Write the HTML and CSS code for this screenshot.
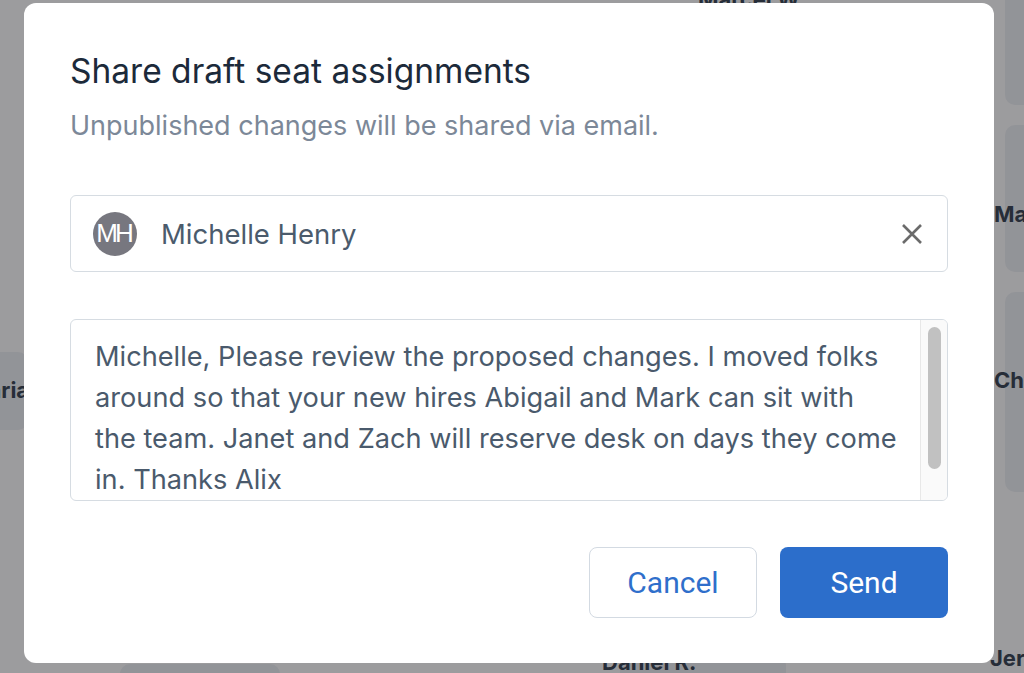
FILE: index.html
```html
<!DOCTYPE html>
<html lang="en">
<head>
    <meta charset="utf-8">
    <title>Seat map</title>
    <link rel="stylesheet" href="styles.css">
</head>
<body>

<!-- floor plan behind the dialog -->
<div class="floor">
    <div class="seat seat-a"><span class="seat-name name-top">Marcel W.</span></div>
    <div class="seat seat-b"></div>
    <div class="seat seat-c"><span class="seat-name">Mark</span></div>
    <div class="seat seat-d"><span class="seat-name">Charles</span></div>
    <div class="seat seat-e"><span class="seat-name">Maria</span></div>
    <div class="seat seat-f"><span class="seat-name">Daniel R.</span></div>
    <div class="seat seat-g"><span class="seat-name">Jeremy</span></div>
    <div class="seat seat-h"></div>
</div>

<div class="backdrop">
    <div class="dialog">
        <h1 class="dialog-title">Share draft seat assignments</h1>
        <p class="dialog-sub">Unpublished changes will be shared via email.</p>

        <div class="recipient">
            <span class="avatar">MH</span>
            <span class="recipient-name">Michelle Henry</span>
            <button class="clear" title="Remove">
                <svg width="22" height="22" viewBox="0 0 22 22">
                    <path d="M2 2L20 20M20 2L2 20" stroke="#6b6b6b" stroke-width="2.6"/>
                </svg>
            </button>
        </div>

        <div class="message">
            <div class="message-text">Michelle, Please review the proposed changes. I moved folks<br>around so that your new hires Abigail and Mark can sit with<br>the team. Janet and Zach will reserve desk on days they come<br>in. Thanks Alix</div>
            <div class="scroll-rail"><div class="scroll-thumb"></div></div>
        </div>

        <div class="actions">
            <button class="btn btn-cancel">Cancel</button>
            <button class="btn btn-send">Send</button>
        </div>
    </div>
</div>

</body>
</html>
```

FILE: styles.css
```css
html, body {
    margin: 0;
    padding: 0;
    width: 1024px;
    height: 673px;
    overflow: hidden;
    background-color: #f7f7f7;
    font-family: Inter, "Liberation Sans", sans-serif;
}

/* floor plan */

.floor {
    position: relative;
    width: 1024px;
    height: 673px;
    overflow: hidden;
}

.seat {
    position: absolute;
    background-color: #e6e8ec;
    border-radius: 10px;
}

.seat-name {
    position: absolute;
    font-family: Inter, sans-serif;
    font-weight: 700;
    font-size: 22px;
    color: #2b3747;
    white-space: nowrap;
}

.seat-a { left: 640px; top: -60px; width: 320px; height: 70px; background: transparent; }
.seat-a .name-top { left: 58px; top: 46px; }
.seat-b { left: 1005px; top: -20px; width: 80px; height: 125px; }
.seat-c { left: 1005px; top: 125px; width: 80px; height: 147px; }
.seat-c .seat-name { left: -11px; top: 76px; }
.seat-d { left: 1005px; top: 292px; width: 80px; height: 200px; }
.seat-d .seat-name { left: -11px; top: 75px; }
.seat-e { left: -90px; top: 352px; width: 118px; height: 78px; }
.seat-e .seat-name { left: 58px; top: 25px; }
.seat-f { left: 620px; top: 655px; width: 166px; height: 60px; }
.seat-f .seat-name { left: -18px; top: -6px; }
.seat-g { left: 1000px; top: 630px; width: 80px; height: 80px; background: transparent; }
.seat-g .seat-name { left: -10px; top: 15px; }
.seat-h { left: 120px; top: 664px; width: 160px; height: 40px; }

/* dialog */

.backdrop {
    position: fixed;
    left: 0;
    top: 0;
    right: 0;
    bottom: 0;
    background-color: rgba(30, 32, 36, 0.42);
    padding: 3px 0 0 24px;
}

.dialog {
    box-sizing: border-box;
    width: 970px;
    height: 660px;
    background-color: #fff;
    border-radius: 12px;
    padding: 46px 46px 0 46px;
}

.dialog-title {
    margin: 0;
    font-size: 33.5px;
    line-height: 44px;
    font-weight: 400;
    color: #1c2a3a;
}

.dialog-sub {
    margin: 17px 0 0 0;
    font-size: 27px;
    line-height: 32px;
    color: #7c8898;
}

.recipient {
    box-sizing: border-box;
    display: flex;
    align-items: center;
    height: 77px;
    margin-top: 53px;
    padding: 0 24px 0 22px;
    border: 1px solid #d6dce2;
    border-radius: 6px;
}

.avatar {
    display: flex;
    align-items: center;
    justify-content: center;
    width: 44px;
    height: 44px;
    border-radius: 50%;
    background-color: #77777f;
    color: #fff;
    font-family: "Liberation Sans", sans-serif;
    font-size: 26px;
    letter-spacing: -3px;
    text-indent: -3px;
}

.recipient-name {
    flex: 1;
    margin-left: 24px;
    font-size: 27.5px;
    color: #4b5b6c;
}

.clear {
    display: flex;
    padding: 0;
    border: 0;
    background: none;
    cursor: pointer;
}

.message {
    box-sizing: border-box;
    display: flex;
    height: 182px;
    margin-top: 47px;
    border: 1px solid #d6dce2;
    border-radius: 6px;
    overflow: hidden;
}

.message-text {
    flex: 1;
    padding: 16px 10px 0 24px;
    font-size: 27.2px;
    line-height: 41px;
    color: #4a5a6c;
    white-space: nowrap;
}

/* scrollbar of the message box */
.scroll-rail {
    width: 27px;
    padding: 7px 6px 0 7px;
    box-sizing: border-box;
    background-color: #fafafa;
    border-left: 1px solid #e8e8e8;
}

.scroll-thumb {
    height: 142px;
    background-color: #c1c1c1;
    border-radius: 7px;
}

.actions {
    display: flex;
    justify-content: flex-end;
    gap: 23px;
    margin-top: 46px;
}

.btn {
    box-sizing: border-box;
    width: 168px;
    height: 71px;
    border-radius: 8px;
    font-family: Roboto, sans-serif;
    font-size: 30px;
    cursor: pointer;
}

.btn-cancel {
    background-color: #fff;
    color: #2f6fcb;
    border: 1px solid #d3dae2;
}

.btn-send {
    background-color: #2c6ecb;
    color: #fff;
    border: 0;
}
```
